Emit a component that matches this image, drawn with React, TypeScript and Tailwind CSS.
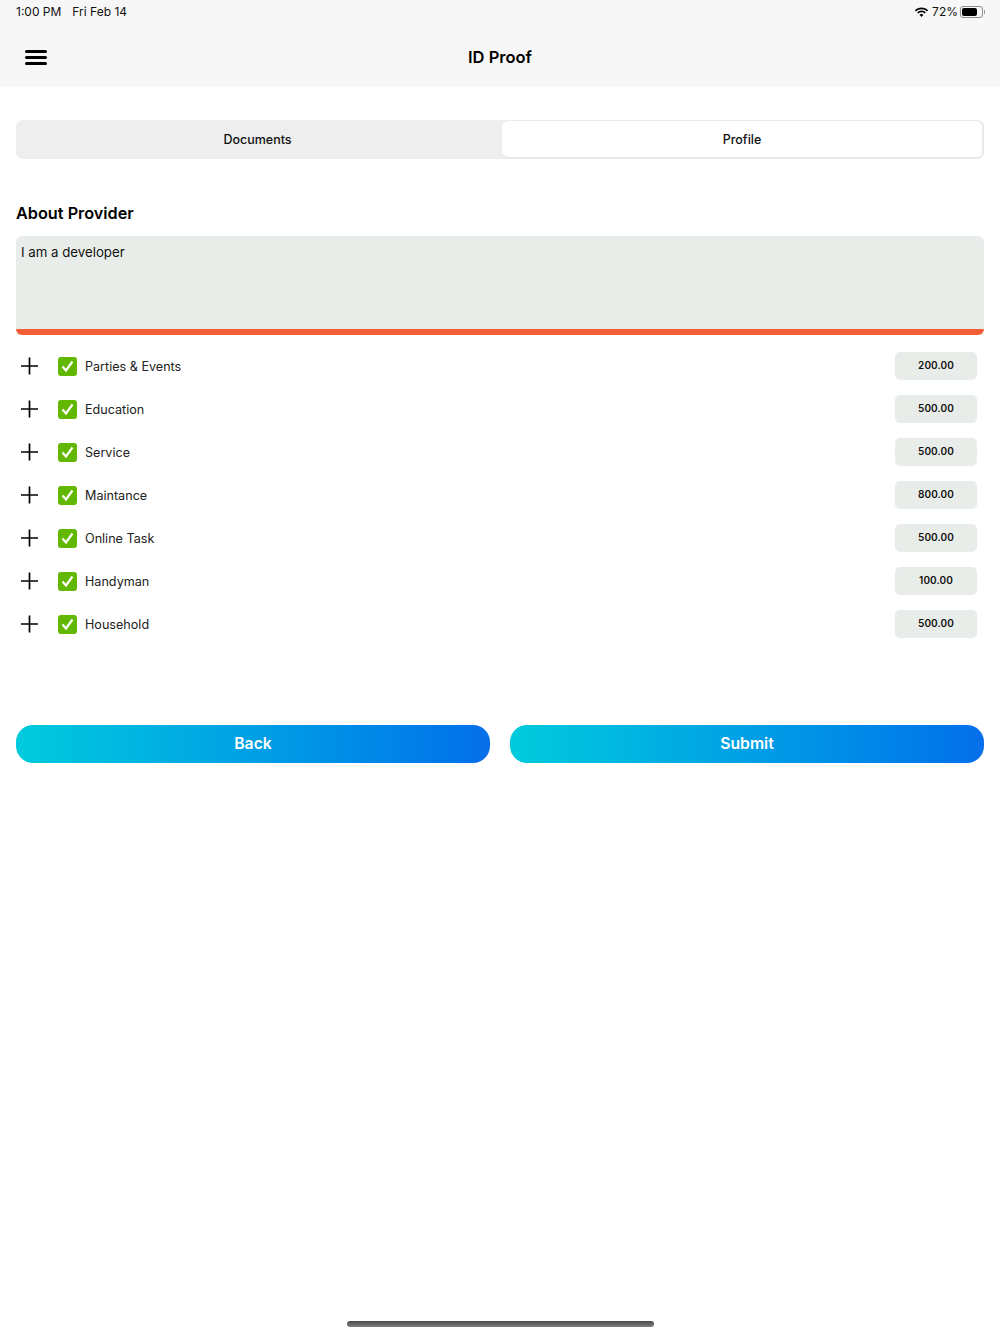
const services = [
  { name: "Parties & Events", price: "200.00" },
  { name: "Education", price: "500.00" },
  { name: "Service", price: "500.00" },
  { name: "Maintance", price: "800.00" },
  { name: "Online Task", price: "500.00" },
  { name: "Handyman", price: "100.00" },
  { name: "Household", price: "500.00" },
];

function Wifi() {
  return (
    <svg width="15" height="11" viewBox="0 0 15 11" className="shrink-0">
      <path d="M7.5 2.2c2.1 0 4 .8 5.5 2.2l1.1-1.2C12.3 1.4 10 .4 7.5.4S2.7 1.4.9 3.2L2 4.4c1.5-1.4 3.4-2.2 5.5-2.2z" fill="#000" />
      <path d="M7.5 5.3c1.2 0 2.3.5 3.2 1.3l1.1-1.2c-1.2-1.1-2.7-1.8-4.3-1.8s-3.1.7-4.3 1.8l1.1 1.2c.9-.8 2-1.3 3.2-1.3z" fill="#000" />
      <path d="M7.5 7c-.8 0-1.4.3-2 .8l2 2.2 2-2.2c-.6-.5-1.2-.8-2-.8z" fill="#000" />
    </svg>
  );
}

function Battery() {
  return (
    <div className="flex items-center gap-px">
      <div className="w-[23px] h-[12px] rounded-[3px] border border-[#8e8e8e] p-px">
        <div className="w-[15px] h-full rounded-[2px] bg-black" />
      </div>
      <div className="w-px h-[4px] bg-[#8e8e8e] rounded-r-sm" />
    </div>
  );
}

function MenuIcon() {
  return (
    <div className="flex flex-col gap-[3px] w-[22px]">
      <div className="h-[3px] rounded-full bg-black" />
      <div className="h-[3px] rounded-full bg-black" />
      <div className="h-[3px] rounded-full bg-black" />
    </div>
  );
}

function PlusIcon() {
  return (
    <svg width="18" height="18" viewBox="0 0 18 18" className="shrink-0">
      <path d="M8.5 0.5V17.5M0 9H17" stroke="#000" strokeWidth="1.7" fill="none" />
    </svg>
  );
}

function CheckBox() {
  return (
    <div className="w-[19px] h-[19px] rounded-[3px] bg-[#62b800] flex items-center justify-center shrink-0">
      <svg width="13" height="12" viewBox="0 0 13 12">
        <path d="M1.5 6.5L5 10.5L11.5 1.5" stroke="#fff" strokeWidth="2.2" fill="none" />
      </svg>
    </div>
  );
}

export default function App() {
  return (
    <div className="w-[1000px] h-[1334px] bg-white flex flex-col font-['Inter',sans-serif] text-black overflow-hidden">
      {/* Header */}
      <div className="h-[87px] bg-[#f7f7f7] flex flex-col shrink-0">
        <div className="h-[24px] pl-4 pr-[15px] flex items-center justify-between text-[12px] text-[#111]">
          <div className="flex gap-[11px]">
            <span>1:00 PM</span>
            <span>Fri Feb 14</span>
          </div>
          <div className="flex items-center gap-[3px]">
            <Wifi />
            <span className="mr-[-1px]">72%</span>
            <Battery />
          </div>
        </div>
        <div className="relative h-[42px] mt-[12px] flex items-center justify-center">
          <div className="absolute left-[25px] top-0 bottom-0 flex items-center">
            <MenuIcon />
          </div>
          <span className="text-[16.5px] font-semibold">ID Proof</span>
        </div>
      </div>

      <div className="px-4 flex flex-col">
        {/* Tabs */}
        <div className="mt-[33px] h-[39px] rounded-[7px] bg-[#eeeeee] flex items-stretch text-[12.5px] text-[#111]">
          <div className="w-[486px] flex items-center justify-center font-medium pr-[3px] pt-[2px]">Documents</div>
          <div className="flex-1 flex items-center justify-center font-medium bg-white rounded-[7px] border-2 border-[#e9e9e9] border-l-0 border-t-[1px] pt-[3px]">
            Profile
          </div>
        </div>

        <h2 className="mt-[44px] text-[16.25px] leading-[21px] font-semibold">About Provider</h2>

        <div className="mt-[12px] h-[99px] rounded-[6px] bg-[#e9edea] border-b-[6px] border-[#f35d38] px-[5px] pt-[6px] text-[13.25px] leading-5 text-[#111]">
          I am a developer
        </div>

        {/* Services */}
        <div className="mt-[17px] flex flex-col gap-[15px]">
          {services.map((s) => (
            <div key={s.name} className="h-[28px] flex items-center pl-[5px] pr-[7px]">
              <PlusIcon />
              <div className="ml-[19px]">
                <CheckBox />
              </div>
              <span className="ml-[8px] pt-[2px] text-[12.6px] text-[#222]">{s.name}</span>
              <div className="ml-auto w-[82px] h-[28px] pb-[2px] rounded-[5px] bg-[#e9edea] flex items-center justify-center text-[10px] font-semibold text-[#111] tracking-[0.1px]">
                {s.price}
              </div>
            </div>
          ))}
        </div>

        {/* Buttons */}
        <div className="mt-[87px] flex gap-[20px]">
          <button className="flex-1 h-[38px] rounded-[17px] bg-gradient-to-r from-[#00cbdc] to-[#086fea] text-white text-[15.75px] font-semibold">
            Back
          </button>
          <button className="flex-1 h-[38px] rounded-[17px] bg-gradient-to-r from-[#00cbdc] to-[#086fea] text-white text-[15.75px] font-semibold">
            Submit
          </button>
        </div>
      </div>

      {/* Home indicator */}
      <div className="mt-auto mb-[7px] mx-auto w-[307px] h-[6px] rounded-full bg-gradient-to-b from-[#4a4a4a] to-[#808080]" />
    </div>
  );
}
